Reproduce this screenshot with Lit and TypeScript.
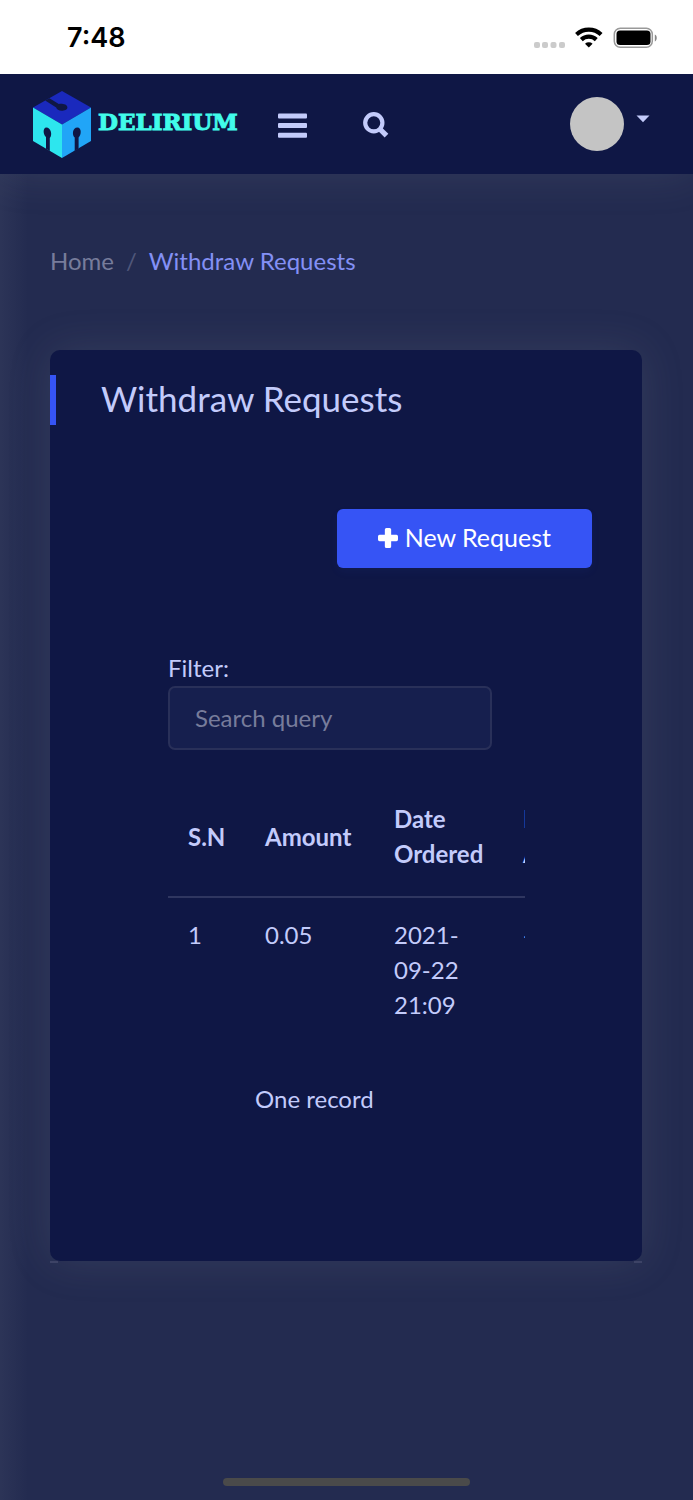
import { LitElement, html, css } from "lit";
import { customElement, state } from "lit/decorators.js";

interface WithdrawRequest {
  sn: number;
  amount: string;
  ordered: string;
  approved: string;
}

@customElement("status-bar")
class StatusBar extends LitElement {
  static styles = css`
    :host {
      display: flex;
      align-items: center;
      justify-content: space-between;
      height: 74px;
      box-sizing: border-box;
      padding: 2px 36px 0 67px;
      background: #fff;
      color: #000;
      position: relative;
      z-index: 2;
    }
    .time {
      font: 600 27px/32px Inter, sans-serif;
    }
    .signals {
      display: block;
    }
  `;

  render() {
    return html`
      <span class="time">7:48</span>
      <svg class="signals" width="124" height="22" viewBox="0 0 124 22" aria-hidden="true">
        <g fill="#cbcbcb">
          <rect x="1" y="15" width="6" height="6" rx="2" />
          <rect x="9" y="15" width="6" height="6" rx="2" />
          <rect x="17.500" y="15" width="6" height="6" rx="2" />
          <rect x="26" y="15" width="6" height="6" rx="2" />
        </g>
        <g fill="none" stroke="#000" stroke-width="4.200">
          <path d="M43.500 7.500a18.200 18.200 0 0 1 24.600 0" />
          <path d="M48.300 12.600a11 11 0 0 1 15 0" />
        </g>
        <path d="M55.800 20.600l-3.800-3.800a5.600 5.600 0 0 1 7.600 0z" />
        <rect x="81.300" y="1.300" width="38" height="19" rx="6" fill="none" stroke="#999" stroke-width="1.500" />
        <rect x="83.500" y="3.500" width="34" height="14.600" rx="3.600" />
        <path d="M121.800 7.600c2.600.8 2.600 6 0 6.800z" fill="#888" />
      </svg>
    `;
  }
}

@customElement("top-nav")
class TopNav extends LitElement {
  static styles = css`
    :host {
      display: flex;
      align-items: center;
      height: 100px;
      box-sizing: border-box;
      padding: 0 43px 0 33px;
      background: #0f1745;
      color: #c3cbfb;
      position: relative;
      z-index: 1;
      box-shadow: 0 0 44px rgba(154, 161, 171, 0.15);
    }
    svg {
      display: block;
    }
    .brand {
      display: flex;
      align-items: center;
      gap: 7px;
      color: #41fcea;
      text-decoration: none;
      font: 700 23px/28px "DejaVu Serif", serif;
      -webkit-text-stroke: 1px #41fcea;
    }
    .name {
      padding-bottom: 4px;
    }
    button {
      border: 0;
      padding: 0;
      background: none;
      color: inherit;
    }
    .menu {
      margin-left: 39px;
      padding-top: 2px;
    }
    .search {
      margin-left: 56px;
      padding-top: 2px;
    }
    .account {
      display: flex;
      gap: 12px;
      margin-left: auto;
    }
    .avatar {
      width: 54px;
      height: 54px;
      border-radius: 50%;
      background: #c4c4c4;
    }
    .caret {
      margin-top: 18px;
    }
  `;

  render() {
    return html`
      <a class="brand" href="#">
        <svg width="58" height="67" viewBox="0 0 58 67" aria-hidden="true">
          <path d="M29 0L58 16.600 29 33.500 0 16.600z" fill="#1a29bd" />
          <path d="M0 16.600L29 33.500V67L0 50z" fill="#2de6ee" />
          <path d="M58 16.600L29 33.500V67L58 50z" fill="#21a5f7" />
          <g fill="#0f1745">
            <path d="M12.200 9.600l4.200-2.400 9.400 5.700c3-.6 8.600.2 8.600 3.500 0 4-10.800 4.600-11.200.2z" />
            <path d="M13 57.800V46c-3-2.500-3.400-9.600.4-9.600 4.300 0 6.400 7.200 3.400 10.600v13z" />
            <path d="M41.700 60V46.500c-3-2.500-2.200-10.100 2.700-10.100 4.300 0 4.200 7.200 1.200 10.100v11z" />
          </g>
        </svg>
        <span class="name">DELIRIUM</span>
      </a>
      <button class="menu" aria-label="Toggle menu">
        <svg width="30" height="26" viewBox="0 0 30 26" fill="currentColor">
          <rect x="1" y="1.500" width="29" height="5" rx="1" />
          <rect x="1" y="11" width="29" height="5" rx="1" />
          <rect x="1" y="20.700" width="29" height="5" rx="1" />
        </svg>
      </button>
      <button class="search" aria-label="Search">
        <svg width="26" height="26" viewBox="0 0 26 26" fill="none" stroke="currentColor">
          <circle cx="10.800" cy="10.800" r="8.600" stroke-width="4.200" />
          <path d="M16.800 17l6.700 6.700" stroke-width="5.200" />
        </svg>
      </button>
      <button class="account" aria-label="Account">
        <span class="avatar"></span>
        <svg class="caret" width="14" height="8" viewBox="0 0 14 8" fill="currentColor">
          <path d="M.5.500h13L7 7.300z" />
        </svg>
      </button>
    `;
  }
}

@customElement("app-root")
class AppRoot extends LitElement {
  static styles = css`
    :host {
      display: flex;
      flex-direction: column;
      min-height: 100vh;
      background: #232b50;
      color: #c3cbfb;
      font: 400 24px/35px Lato, sans-serif;
    }
    main {
      flex: 1;
      display: flex;
      flex-direction: column;
      padding: 69px 51px 14px 50px;
      background: linear-gradient(to right, rgba(154, 161, 171, 0.08), rgba(154, 161, 171, 0) 28px);
    }
    .crumbs {
      display: flex;
      gap: 12px;
      margin: 0;
      padding: 0;
      list-style: none;
    }
    .crumbs a {
      color: #777c9b;
      text-decoration: none;
    }
    .divider {
      color: #50577a;
    }
    .current {
      color: #8390f5;
    }
    .card {
      margin-top: 72px;
      padding: 25px 50px 145px 0;
      border-radius: 10px;
      background: #0f1745;
      box-shadow: 0 0 44px rgba(154, 161, 171, 0.15);
    }
    .edge {
      height: 2px;
      border: solid #3d4366;
      border-width: 0 8px;
    }
    h1 {
      margin: 0;
      padding: 0 0 4px 45px;
      border-left: 6px solid #3654f5;
      font: 400 35px/46px Lato, sans-serif;
    }
    .actions {
      display: flex;
      justify-content: flex-end;
      margin-top: 84px;
    }
    .new {
      display: flex;
      align-items: center;
      gap: 7px;
      padding: 11px 41px 13px;
      border: 0;
      border-radius: 6px;
      background: #3654f5;
      color: #fff;
      font: 400 25px/35px Lato, sans-serif;
      box-shadow: 0 4px 10px rgba(54, 84, 245, 0.06);
    }
    .records {
      margin: 82px 67px 0 118px;
    }
    .filter {
      display: block;
      padding-bottom: 1px;
    }
    .query {
      display: block;
      box-sizing: border-box;
      width: 324px;
      max-width: 100%;
      height: 64px;
      padding: 0 25px 2px;
      border: 2px solid #293059;
      border-radius: 7px;
      background: #161f4e;
      color: #c3cbfb;
      font: inherit;
    }
    .query::placeholder {
      color: #777c9b;
      opacity: 1;
    }
    .scroller {
      margin-top: 25px;
      overflow: auto hidden;
      scrollbar-width: none;
    }
    table {
      width: 500px;
      table-layout: fixed;
      border-collapse: collapse;
      text-align: left;
    }
    .sn {
      width: 77px;
    }
    .amount {
      width: 129px;
    }
    .date {
      width: 129px;
    }
    th {
      padding: 26px 0 25px 20px;
      border-bottom: 2px solid #2f3660;
      font-weight: 700;
    }
    td {
      padding: 19px 37px 21px 20px;
      vertical-align: top;
    }
    td:first-child,
    td:nth-child(2) {
      padding-right: 0;
    }
    .count {
      width: 82%;
      margin: 38px 0 0;
      text-align: center;
    }
    .home-bar {
      align-self: center;
      width: 247px;
      height: 8px;
      margin-top: auto;
      border-radius: 4px;
      background: #4a4a4a;
    }
  `;

  @state() private query = "";

  private rows: WithdrawRequest[] = [
    { sn: 1, amount: "0.05", ordered: "2021-09-22 21:09", approved: "-" },
  ];

  private onInput(e: Event) {
    this.query = (e.target as HTMLInputElement).value;
  }

  render() {
    const shown = this.rows.filter((r) => `${r.amount} ${r.ordered}`.includes(this.query));
    return html`
      <status-bar></status-bar>
      <top-nav></top-nav>
      <main>
        <nav aria-label="Breadcrumb">
          <ol class="crumbs">
            <li><a href="#">Home</a></li>
            <li class="divider" aria-hidden="true">/</li>
            <li class="current">Withdraw Requests</li>
          </ol>
        </nav>
        <section class="card">
          <h1>Withdraw Requests</h1>
          <div class="actions">
            <button class="new">
              <svg width="20" height="20" viewBox="0 0 19 19" fill="currentColor" aria-hidden="true">
                <path d="M8 0h3q1.500 0 1.500 1.500v5h5q1.500 0 1.500 1.500v3q0 1.500-1.500 1.500h-5v5q0 1.500-1.500 1.500h-3q-1.500 0-1.500-1.500v-5h-5q-1.500 0-1.500-1.500v-3q0-1.500 1.500-1.500h5v-5q0-1.500 1.500-1.500z" />
              </svg>
              New Request
            </button>
          </div>
          <div class="records">
            <label class="filter" for="query">Filter:</label>
            <input class="query" id="query" type="text" placeholder="Search query" .value=${this.query} @input=${this.onInput} />
            <div class="scroller">
              <table>
                <colgroup>
                  <col class="sn" />
                  <col class="amount" />
                  <col class="date" />
                  <col />
                </colgroup>
                <thead>
                  <tr>
                    <th>S.N</th>
                    <th>Amount</th>
                    <th>Date<br />Ordered</th>
                    <th>Date<br />Approved</th>
                  </tr>
                </thead>
                <tbody>
                  ${shown.map(
                    (r) => html`<tr>
                      <td>${r.sn}</td>
                      <td>${r.amount}</td>
                      <td>${r.ordered}</td>
                      <td>${r.approved}</td>
                    </tr>`
                  )}
                </tbody>
              </table>
            </div>
            <p class="count">One record</p>
          </div>
        </section>
        <div class="edge"></div>
        <div class="home-bar"></div>
      </main>
    `;
  }
}
